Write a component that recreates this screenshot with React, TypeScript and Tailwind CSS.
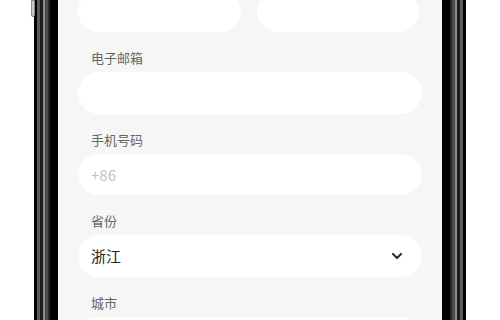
import { ChevronDown } from "lucide-react"

const font = { fontFamily: '"Noto Sans CJK SC", "Noto Sans", sans-serif' }

function Field({ label, children }: { label: string; children: React.ReactNode }) {
  return (
    <div className="mt-4">
      <div className="mb-1 pl-[13px] text-[13px] leading-5 text-[#666]">{label}</div>
      {children}
    </div>
  )
}

function TextInput({ placeholder }: { placeholder?: string }) {
  return (
    <input
      className="block h-[41.5px] w-full rounded-full bg-white px-[13px] text-[15px] text-[#222] outline-none placeholder:text-[#c4c4c4]"
      placeholder={placeholder}
      style={font}
    />
  )
}

export default function App() {
  return (
    <div className="relative h-[320px] w-[500px] overflow-hidden bg-white" style={font}>
      {/* side button */}
      <div className="absolute left-[31px] top-0 h-[17px] w-[4px] rounded-b-sm border border-[#8a8a8a] bg-[#c8c8c8]" />

      {/* phone frame */}
      <div className="ml-[34px] h-[340px] w-[432px] bg-black px-[3px]">
        <div className="h-full bg-[#5a5a5a] px-[3px]">
          <div className="h-full bg-[#1c1c1c] px-[3px]">
            <div className="h-full bg-[#8a8a8a] px-[2px]">
              <div className="h-full bg-[#4a4a4a] px-[3px]">
                <div className="h-full bg-[#262626] px-[2px]">
                  <div className="h-full bg-black px-[8px]">
                    {/* screen */}
                    <div className="h-full w-[384px] overflow-hidden bg-[#f6f6f6] px-5">
                      <div className="-mt-[9.5px] grid grid-cols-2 gap-[16px] pr-[3px]">
                        <TextInput />
                        <TextInput />
                      </div>

                      <Field label="电子邮箱">
                        <TextInput />
                      </Field>

                      <Field label="手机号码">
                        <TextInput placeholder="+86" />
                      </Field>

                      <Field label="省份">
                        <div className="flex h-[41.5px] items-center justify-between rounded-full bg-white pl-[13px] pr-[17px]">
                          <span className="text-[15px] text-[#222]">浙江</span>
                          <ChevronDown className="h-4 w-4 text-[#333]" strokeWidth={3.2} />
                        </div>
                      </Field>

                      <Field label="城市">
                        <TextInput />
                      </Field>
                    </div>
                  </div>
                </div>
              </div>
            </div>
          </div>
        </div>
      </div>
    </div>
  )
}
